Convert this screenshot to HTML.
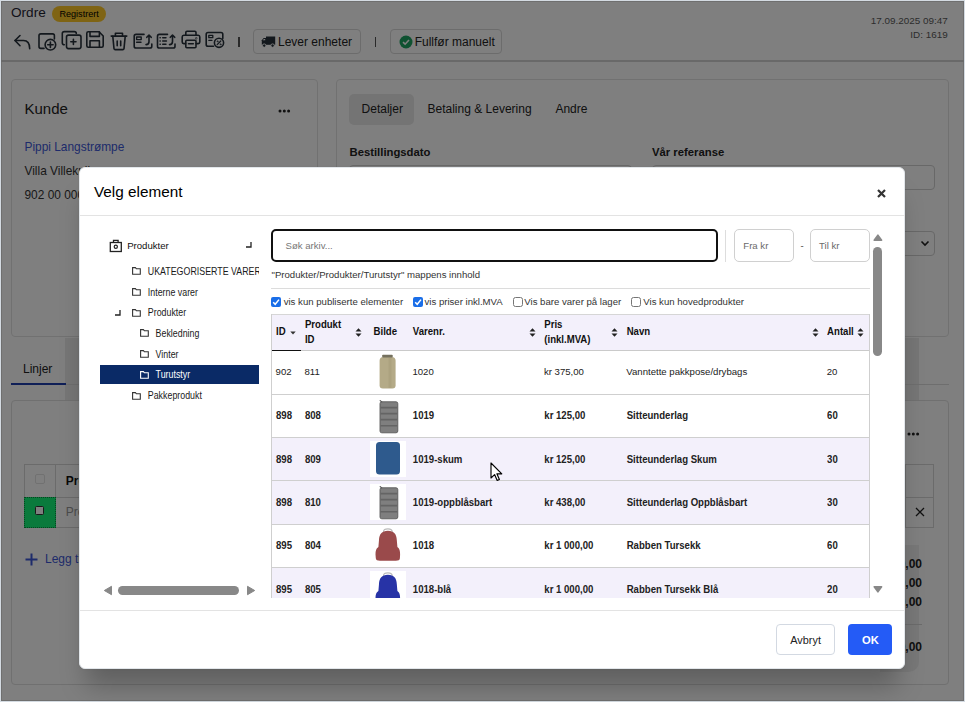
<!DOCTYPE html><html><head><meta charset="utf-8"><style>
*{box-sizing:border-box;margin:0;padding:0}
html,body{width:965px;height:702px;overflow:hidden;background:#d4dbe2;font-family:"Liberation Sans",sans-serif;color:#222}
.a{position:absolute;white-space:nowrap}
.t{position:absolute;white-space:nowrap;line-height:0;height:0}
.bx{position:absolute}
#ov{position:absolute;left:1px;top:1px;width:963px;height:700px;background:rgba(0,0,0,.5)}
#modal{position:absolute;left:79px;top:167px;width:826px;height:502px;background:#fff;border-radius:6px;border:1px solid #e2e6ea;
 box-shadow:0 24px 24px -7px rgba(0,0,0,.25),0 0 3px rgba(0,0,0,.06)}
.m{position:absolute;white-space:nowrap;line-height:0;height:0}
.tb{font-size:9.6px;color:#333}
.b{font-weight:bold}
</style></head><body>
<div class="bx" style="left:1px;top:1px;width:963px;height:700px;background:#fff;border:1px solid #dedede"></div>
<div id="pagec"><div class="t" style="left:11.0px;top:13.0px;font-size:13.6px;color:#1f2433;">Ordre</div><div class="bx" style="left:52.0px;top:6.0px;width:54.0px;height:15.7px;background:#ffc828;border-radius:8px"></div><div class="t" style="left:59.4px;top:13.8px;font-size:9.1px;color:#000;">Registrert</div><svg class="bx" style="left:12px;top:32px" width="20" height="20" viewBox="0 0 20 20" fill="none" stroke="#27313b" stroke-width="1.6" stroke-linecap="round" stroke-linejoin="round"><path d="M8 3.5L3 8.5L8 13.7"/><path d="M3 8.5H11.5Q17.7 8.5 17.7 16.8"/></svg><svg class="bx" style="left:37px;top:32px" width="22" height="20" viewBox="0 0 22 20" fill="none" stroke="#27313b" stroke-width="1.6" stroke-linecap="round" stroke-linejoin="round"><path d="M7 16.4H3.8Q2 16.4 2 14.6V3.6Q2 1.9 3.8 1.9H15.6Q17.4 1.9 17.4 3.6V7"/><circle cx="13.4" cy="12.7" r="5.3"/><path d="M13.4 10V15.4M10.7 12.7H16.1"/></svg><svg class="bx" style="left:61px;top:30px" width="22" height="20" viewBox="0 0 22 20" fill="none" stroke="#27313b" stroke-width="1.6" stroke-linecap="round" stroke-linejoin="round"><path d="M3.3 14.7Q1.3 14.7 1.3 12.7V3.5Q1.3 1.6 3.3 1.6H13.3Q15.3 1.6 15.3 3.5"/><rect x="5.5" y="5.1" width="14.5" height="13.5" rx="2"/><path d="M12.4 9.2V14.4M9.8 11.8H15"/></svg><svg class="bx" style="left:85px;top:30px" width="20" height="20" viewBox="0 0 20 20" fill="none" stroke="#27313b" stroke-width="1.6" stroke-linecap="round" stroke-linejoin="round"><path d="M1.8 3.3Q1.8 1.8 3.3 1.8H14L18.2 6V15.8Q18.2 17.3 16.7 17.3H3.3Q1.8 17.3 1.8 15.8Z"/><path d="M5 1.8V6.4H14.4V1.8"/><path d="M5 17.3V10.8H14.4V17.3"/></svg><svg class="bx" style="left:110px;top:32px" width="18" height="20" viewBox="0 0 18 20" fill="none" stroke="#27313b" stroke-width="1.6" stroke-linecap="round" stroke-linejoin="round"><path d="M1.2 4.1H16.8"/><path d="M5.4 4V1.3H12.5V4"/><path d="M2.8 4.4L4 16.6Q4.2 17.6 5.2 17.6H12.8Q13.8 17.6 14 16.6L15.2 4.4"/><path d="M7.2 9V13.8M10.7 9V13.8"/></svg><svg class="bx" style="left:133px;top:33px" width="21" height="17" viewBox="0 0 21 17" fill="none" stroke="#27313b" stroke-width="1.6" stroke-linecap="round" stroke-linejoin="round"><path d="M11 1.4H3Q1.2 1.4 1.2 3.2V13.2Q1.2 15 3 15H17Q18.8 15 18.8 13.2V11"/><rect x="3.6" y="4" width="4.6" height="2.6" stroke-width="1.4"/><path d="M3.6 9.3H8" stroke-width="1.4"/><path d="M13 11.6Q16 11.6 16 8.5V2.3M13.8 4.3L16 2L18.2 4.3"/></svg><svg class="bx" style="left:156px;top:33px" width="22" height="17" viewBox="0 0 22 17" fill="none" stroke="#27313b" stroke-width="1.6" stroke-linecap="round" stroke-linejoin="round"><path d="M11.5 1.4H3.3Q1.5 1.4 1.5 3.2V13.2Q1.5 15 3.3 15H17.3Q19 15 19 13.2V11"/><path d="M4 4.8H4.3M4 8H4.3M4 11.2H4.3M6.7 4.8H10M6.7 8H10.5M6.7 11.2H10" stroke-width="1.4"/><path d="M13.5 11.6Q16.5 11.6 16.5 8.5V2.3M14.3 4.3L16.5 2L18.7 4.3"/></svg><svg class="bx" style="left:181px;top:30px" width="20" height="19" viewBox="0 0 20 19" fill="none" stroke="#27313b" stroke-width="1.6" stroke-linecap="round" stroke-linejoin="round"><path d="M4.8 5.2V2.5Q4.8 1.3 6 1.3H13.8Q15 1.3 15 2.5V5.2"/><path d="M4.6 13.6H2.8Q1.2 13.6 1.2 12V7Q1.2 5.3 2.8 5.3H17.2Q18.8 5.3 18.8 7V12Q18.8 13.6 17.2 13.6H15.2"/><rect x="4.8" y="10.3" width="10.2" height="7.4" rx="1"/><path d="M7.5 13.8H12.3"/><circle cx="15.3" cy="8.3" r=".3" fill="{IC}"/></svg><svg class="bx" style="left:205px;top:31px" width="20" height="18" viewBox="0 0 20 18" fill="none" stroke="#27313b" stroke-width="1.6" stroke-linecap="round" stroke-linejoin="round"><path d="M8.5 15.3H3Q1.2 15.3 1.2 13.5V3.3Q1.2 1.5 3 1.5H16Q17.8 1.5 17.8 3.3V7.5"/><rect x="3.8" y="4.3" width="4" height="2.4" stroke-width="1.3"/><path d="M3.8 9.3H7" stroke-width="1.3"/><circle cx="14" cy="11.8" r="4.6"/><path d="M12.2 13.6L15.8 10" stroke-width="1.3"/><circle cx="12.5" cy="10.3" r=".5" fill="{IC}" stroke-width="0.8"/><circle cx="15.5" cy="13.3" r=".5" fill="{IC}" stroke-width="0.8"/></svg><div class="bx" style="left:238.3px;top:36.5px;width:1.5px;height:10.0px;background:#555"></div><div class="bx" style="left:253.4px;top:29.0px;width:107.3px;height:25.0px;border:1px solid #d8d8d8;border-radius:4px"></div><svg class="bx" style="left:261px;top:35px" width="15" height="13" viewBox="0 0 15 13"><path d="M5 1.5H14.2V9.8H5Z" fill="#27313b"/><path d="M0.8 5.2L2.6 3H5V9.8H0.8Z" fill="#27313b"/><circle cx="3.2" cy="10.6" r="1.7" fill="#27313b" stroke="#fff" stroke-width=".9"/><circle cx="11.6" cy="10.6" r="1.7" fill="#27313b" stroke="#fff" stroke-width=".9"/><path d="M1.8 5.3L2.9 4H4.2V5.3Z" fill="#fff"/></svg><div class="t" style="left:278.0px;top:41.5px;font-size:12px;color:#222;">Lever enheter</div><div class="bx" style="left:374.9px;top:36.5px;width:1.5px;height:10.0px;background:#555"></div><div class="bx" style="left:390.0px;top:29.0px;width:112.4px;height:25.0px;border:1px solid #d8d8d8;border-radius:4px"></div><svg class="bx" style="left:398.5px;top:34.8px" width="14" height="14" viewBox="0 0 14 14"><circle cx="7" cy="7" r="6.5" fill="#1fa463"/><path d="M4 7.2L6.1 9.2L10 5" fill="none" stroke="#fff" stroke-width="1.6"/></svg><div class="t" style="left:414.7px;top:41.5px;font-size:12px;color:#222;">Fullfør manuelt</div><div class="t" style="left:947.7px;top:21.3px;font-size:9.9px;color:#5a5a5a;transform:translateX(-100%)">17.09.2025 09:47</div><div class="t" style="left:947.7px;top:34.8px;font-size:9.9px;color:#5a5a5a;transform:translateX(-100%)">ID: 1619</div><div class="bx" style="left:1.0px;top:60.0px;width:963.0px;height:1.5px;background:#d2d2d2"></div><div class="bx" style="left:10.5px;top:79.3px;width:307.0px;height:258.2px;border:1px solid #e2e2e2;border-radius:4px"></div><div class="t" style="left:24.5px;top:109.2px;font-size:15px;color:#222;">Kunde</div><svg class="bx" style="left:278px;top:108.5px" width="13" height="4" viewBox="0 0 13 4"><circle cx="2" cy="2" r="1.5" fill="#222"/><circle cx="6.3" cy="2" r="1.5" fill="#222"/><circle cx="10.6" cy="2" r="1.5" fill="#222"/></svg><div class="t" style="left:24.5px;top:147.0px;font-size:11.9px;color:#3d57d6;">Pippi Langstrømpe</div><div class="t" style="left:24.5px;top:171.0px;font-size:11.9px;color:#333;">Villa Villekulla</div><div class="t" style="left:24.5px;top:194.5px;font-size:11.9px;color:#333;">902 00 000</div><div class="bx" style="left:335.5px;top:79.3px;width:613.0px;height:258.2px;border:1px solid #e2e2e2;border-radius:4px"></div><div class="bx" style="left:349.2px;top:93.5px;width:64.5px;height:31.0px;background:#e9e9e9;border-radius:5px"></div><div class="t" style="left:361.6px;top:109.2px;font-size:12px;color:#222;">Detaljer</div><div class="t" style="left:427.5px;top:109.2px;font-size:12px;color:#222;">Betaling &amp; Levering</div><div class="t" style="left:555.4px;top:109.2px;font-size:12px;color:#222;">Andre</div><div class="t" style="left:349.5px;top:152.3px;font-size:11.3px;color:#222;font-weight:bold;">Bestillingsdato</div><div class="t" style="left:652.0px;top:152.3px;font-size:11.3px;color:#222;font-weight:bold;">Vår referanse</div><div class="bx" style="left:349.0px;top:164.5px;width:283.0px;height:25.5px;border:1px solid #d0d0d0;border-radius:4px"></div><div class="bx" style="left:652.0px;top:164.5px;width:282.6px;height:25.5px;border:1px solid #d0d0d0;border-radius:4px"></div><div class="bx" style="left:652.0px;top:230.5px;width:282.6px;height:25.5px;border:1px solid #d0d0d0;border-radius:4px"></div><svg class="bx" style="left:920px;top:240px" width="10" height="7" viewBox="0 0 10 7"><path d="M1.5 1.5L5 5L8.5 1.5" fill="none" stroke="#222" stroke-width="1.6"/></svg><div class="t" style="left:23.0px;top:369.0px;font-size:12px;color:#222;">Linjer</div><div class="bx" style="left:65.0px;top:337.5px;width:15.0px;height:63.0px;background:#ececec"></div><div class="bx" style="left:905.0px;top:337.5px;width:14.0px;height:63.0px;background:#ececec"></div><div class="bx" style="left:880.0px;top:545.0px;width:39.0px;height:127.0px;background:#f1f1f1;border-radius:0 0 10px 0"></div><div class="bx" style="left:11.0px;top:384.0px;width:937.5px;height:1.0px;background:#dcdcdc"></div><div class="bx" style="left:11.0px;top:383.0px;width:55.0px;height:2.0px;background:#1e3fae"></div><div class="bx" style="left:10.5px;top:400.3px;width:938.0px;height:285.2px;border:1px solid #e0e0e0;border-radius:4px"></div><svg class="bx" style="left:907px;top:432px" width="13" height="4" viewBox="0 0 13 4"><circle cx="2" cy="2" r="1.5" fill="#222"/><circle cx="6.3" cy="2" r="1.5" fill="#222"/><circle cx="10.6" cy="2" r="1.5" fill="#222"/></svg><div class="bx" style="left:24.4px;top:464.0px;width:910.1px;height:63.5px;border:1px solid #d6d6d6"></div><div class="bx" style="left:24.4px;top:496.5px;width:910.1px;height:1.0px;background:#d6d6d6"></div><div class="bx" style="left:55.0px;top:464.5px;width:1.0px;height:63.0px;background:#d6d6d6"></div><div class="bx" style="left:904.5px;top:464.5px;width:1.0px;height:63.0px;background:#d6d6d6"></div><div class="bx" style="left:35.2px;top:474.3px;width:9.8px;height:9.7px;border:1px solid #e2e2e2;border-radius:2px;background:#fff"></div><div class="t" style="left:65.8px;top:481.2px;font-size:12px;color:#111;font-weight:bold;">Produkt</div><div class="bx" style="left:24.0px;top:496.5px;width:32.0px;height:31.5px;background:#14f478;outline:1px dotted #0b8a40;outline-offset:-1px"></div><div class="bx" style="left:35.3px;top:506.0px;width:9.0px;height:9.3px;border:1.2px solid #333;border-radius:1.5px;background:#fff"></div><div class="t" style="left:65.8px;top:512.0px;font-size:12px;color:#999;">Produkt</div><svg class="bx" style="left:915px;top:507px" width="10" height="10" viewBox="0 0 10 10"><path d="M1 1L9 9M9 1L1 9" stroke="#222" stroke-width="1.3"/></svg><svg class="bx" style="left:24.5px;top:553px" width="13" height="13" viewBox="0 0 13 13"><path d="M6.5 0.5V12.5M0.5 6.5H12.5" stroke="#3d57d6" stroke-width="2"/></svg><div class="t" style="left:45.0px;top:559.3px;font-size:12px;color:#3d57d6;">Legg til linje</div><div class="t" style="left:922.0px;top:564.0px;font-size:12px;color:#222;font-weight:bold;transform:translateX(-100%)">1 000,00</div><div class="t" style="left:922.0px;top:582.9px;font-size:12px;color:#222;font-weight:bold;transform:translateX(-100%)">1 000,00</div><div class="t" style="left:922.0px;top:601.6px;font-size:12px;color:#222;font-weight:bold;transform:translateX(-100%)">1 000,00</div><div class="bx" style="left:800.0px;top:624.0px;width:122.0px;height:1.0px;background:#d6d6d6"></div><div class="t" style="left:922.0px;top:646.7px;font-size:12px;color:#222;font-weight:bold;transform:translateX(-100%)">1 000,00</div></div>
<div id="ov"></div>
<div id="modal">
<div class="m" style="left:14.0px;top:23.5px;font-size:15.3px;color:#000;">Velg element</div><svg class="bx" style="left:797px;top:20.5px" width="9" height="9" viewBox="0 0 9 9"><path d="M1 1L8 8M8 1L1 8" stroke="#333" stroke-width="2.2" stroke-linecap="butt"/></svg><div class="bx" style="left:0.0px;top:47.0px;width:825.0px;height:1.0px;background:#e3e3e3"></div><div class="bx" style="left:0.0px;top:442.0px;width:825.0px;height:1.0px;background:#e3e3e3"></div><div class="bx" style="left:696.3px;top:456.0px;width:58.7px;height:31.0px;border:1px solid #d3d9e2;border-radius:4px;background:#fff"></div><div class="m" style="left:710.3px;top:472.0px;font-size:10.9px;color:#222;">Avbryt</div><div class="bx" style="left:768.0px;top:456.0px;width:44.0px;height:31.0px;background:#245bf6;border-radius:4px"></div><div class="m" style="left:782.0px;top:472.0px;font-size:11.2px;color:#fff;font-weight:bold;">OK</div><svg class="bx" style="left:29px;top:71px" width="14" height="14" viewBox="0 0 14 14"><rect x="1.3" y="3.5" width="11" height="9" fill="none" stroke="#222" stroke-width="1.3"/><path d="M4.5 3.3V1.4h4.6v1.9" fill="none" stroke="#222" stroke-width="1.3"/><circle cx="6.8" cy="7.8" r="1.6" fill="none" stroke="#222" stroke-width="1.2"/></svg><div class="m" style="left:47.2px;top:77.5px;font-size:9.6px;color:#111;">Produkter</div><svg class="bx" style="left:166.0px;top:74.0px" width="6" height="6" viewBox="0 0 6 6"><path d="M5 0V5H0" fill="none" stroke="#222" stroke-width="1.3"/></svg><svg class="bx" style="left:34.5px;top:141.5px" width="6" height="6" viewBox="0 0 6 6"><path d="M5 0V5H0" fill="none" stroke="#222" stroke-width="1.3"/></svg><div class="bx" style="left:20.0px;top:197.0px;width:159.0px;height:19.0px;background:#0a2a66"></div><div class="bx" style="left:0;top:0;width:179px;height:420px;overflow:hidden"><svg class="bx" style="left:52.0px;top:98.7px" width="9" height="8" viewBox="0 0 9 8"><path d="M0.6 7.3V0.6H3.4L4.4 1.8H8.3V7.3Z" fill="none" stroke="#333" stroke-width="1.1"/></svg><div class="m" style="left:67.8px;top:103.6px;font-size:8.85px;color:#1a1a1a;transform:scaleY(1.13);transform-origin:0 0;">UKATEGORISERTE VARER</div><svg class="bx" style="left:52.0px;top:119.6px" width="9" height="8" viewBox="0 0 9 8"><path d="M0.6 7.3V0.6H3.4L4.4 1.8H8.3V7.3Z" fill="none" stroke="#333" stroke-width="1.1"/></svg><div class="m" style="left:67.8px;top:124.5px;font-size:8.85px;color:#1a1a1a;transform:scaleY(1.13);transform-origin:0 0;">Interne varer</div><svg class="bx" style="left:52.0px;top:140.5px" width="9" height="8" viewBox="0 0 9 8"><path d="M0.6 7.3V0.6H3.4L4.4 1.8H8.3V7.3Z" fill="none" stroke="#333" stroke-width="1.1"/></svg><div class="m" style="left:67.8px;top:145.4px;font-size:8.85px;color:#1a1a1a;transform:scaleY(1.13);transform-origin:0 0;">Produkter</div><svg class="bx" style="left:60.0px;top:161.1px" width="9" height="8" viewBox="0 0 9 8"><path d="M0.6 7.3V0.6H3.4L4.4 1.8H8.3V7.3Z" fill="none" stroke="#333" stroke-width="1.1"/></svg><div class="m" style="left:75.6px;top:166.0px;font-size:8.85px;color:#1a1a1a;transform:scaleY(1.13);transform-origin:0 0;">Bekledning</div><svg class="bx" style="left:60.0px;top:181.8px" width="9" height="8" viewBox="0 0 9 8"><path d="M0.6 7.3V0.6H3.4L4.4 1.8H8.3V7.3Z" fill="none" stroke="#333" stroke-width="1.1"/></svg><div class="m" style="left:75.6px;top:186.7px;font-size:8.85px;color:#1a1a1a;transform:scaleY(1.13);transform-origin:0 0;">Vinter</div><svg class="bx" style="left:60.0px;top:202.5px" width="9" height="8" viewBox="0 0 9 8"><path d="M0.6 7.3V0.6H3.4L4.4 1.8H8.3V7.3Z" fill="none" stroke="#fff" stroke-width="1.1"/></svg><div class="m" style="left:75.6px;top:207.4px;font-size:8.85px;color:#fff;transform:scaleY(1.13);transform-origin:0 0;">Turutstyr</div><svg class="bx" style="left:52.0px;top:223.5px" width="9" height="8" viewBox="0 0 9 8"><path d="M0.6 7.3V0.6H3.4L4.4 1.8H8.3V7.3Z" fill="none" stroke="#333" stroke-width="1.1"/></svg><div class="m" style="left:67.8px;top:228.4px;font-size:8.85px;color:#1a1a1a;transform:scaleY(1.13);transform-origin:0 0;">Pakkeprodukt</div></div><svg class="bx" style="left:23px;top:417px" width="10" height="11" viewBox="0 0 10 11"><path d="M1.3 5.5L8.5 1.3V9.7Z" fill="#888" stroke="#888" stroke-linejoin="round"/></svg><div class="bx" style="left:37.8px;top:418.0px;width:121.2px;height:9.0px;background:#888;border-radius:5px"></div><svg class="bx" style="left:166px;top:417px" width="10" height="11" viewBox="0 0 10 11"><path d="M8.7 5.5L1.5 1.3V9.7Z" fill="#888" stroke="#888" stroke-linejoin="round"/></svg><div class="bx" style="left:191.2px;top:61.2px;width:446.6px;height:32.8px;border:2px solid #111;border-radius:5px"></div><div class="m" style="left:205.5px;top:77.5px;font-size:9.6px;color:#777;">Søk arkiv...</div><div class="bx" style="left:645.0px;top:62.0px;width:1.0px;height:31.5px;background:#ddd"></div><div class="bx" style="left:654.4px;top:61.4px;width:59.4px;height:32.2px;border:1px solid #d0d0d0;border-radius:5px"></div><div class="m" style="left:663.3px;top:77.5px;font-size:9.6px;color:#6a6a6a;">Fra kr</div><div class="m" style="left:720.5px;top:77.5px;font-size:9.6px;color:#444;">-</div><div class="bx" style="left:730.0px;top:61.4px;width:59.5px;height:32.2px;border:1px solid #d0d0d0;border-radius:5px"></div><div class="m" style="left:739.0px;top:77.5px;font-size:9.6px;color:#6a6a6a;">Til kr</div><svg class="bx" style="left:792px;top:65px" width="12" height="9" viewBox="0 0 12 9"><path d="M2.2 7.2L5.9 2.2L9.6 7.2Z" fill="#888" stroke="#888" stroke-width="1.6" stroke-linejoin="round"/></svg><div class="bx" style="left:793.2px;top:79.0px;width:8.8px;height:109.2px;background:#888;border-radius:5px"></div><svg class="bx" style="left:792px;top:417px" width="12" height="9" viewBox="0 0 12 9"><path d="M2.2 1.8L5.9 6.8L9.6 1.8Z" fill="#888" stroke="#888" stroke-width="1.6" stroke-linejoin="round"/></svg><div class="m" style="left:191.5px;top:106.9px;font-size:9.6px;color:#333;">"Produkter/Produkter/Turutstyr" mappens innhold</div><div class="bx" style="left:191.0px;top:120.0px;width:599.0px;height:1.0px;background:#dcdcdc"></div><svg class="bx" style="left:191.2px;top:128.7px" width="10" height="10" viewBox="0 0 10 10"><rect x="0" y="0" width="10" height="10" rx="2" fill="#1a6ee8"/><path d="M2.2 5.2L4.2 7.3L8 2.6" fill="none" stroke="#fff" stroke-width="1.5"/></svg><div class="m" style="left:203.7px;top:133.5px;font-size:9.6px;color:#333;">vis kun publiserte elementer</div><svg class="bx" style="left:333.0px;top:128.7px" width="10" height="10" viewBox="0 0 10 10"><rect x="0" y="0" width="10" height="10" rx="2" fill="#1a6ee8"/><path d="M2.2 5.2L4.2 7.3L8 2.6" fill="none" stroke="#fff" stroke-width="1.5"/></svg><div class="m" style="left:344.5px;top:133.5px;font-size:9.6px;color:#333;">vis priser inkl.MVA</div><svg class="bx" style="left:432.7px;top:128.7px" width="10" height="10" viewBox="0 0 10 10"><rect x="0.5" y="0.5" width="9" height="9" rx="2" fill="#fff" stroke="#767676"/></svg><div class="m" style="left:444.3px;top:133.5px;font-size:9.6px;color:#333;">Vis bare varer på lager</div><svg class="bx" style="left:551.3px;top:128.7px" width="10" height="10" viewBox="0 0 10 10"><rect x="0.5" y="0.5" width="9" height="9" rx="2" fill="#fff" stroke="#767676"/></svg><div class="m" style="left:563.3px;top:133.5px;font-size:9.6px;color:#333;">Vis kun hovedprodukter</div><div class="bx" style="left:191.3px;top:146px;width:598.3px;height:283.6px;overflow:hidden;border-left:1px solid #cfcfcf;border-right:1px solid #cfcfcf"><div class="bx" style="left:-1.0px;top:0.0px;width:598.7px;height:37.0px;background:#f3f0fb;border-top:1px solid #d6d6d6;border-bottom:1px solid #cacaca"></div><div class="bx" style="left:-1.0px;top:35.5px;width:29.7px;height:1.7px;background:#111"></div><div class="m tb" style="left:3.7px;top:18.3px;color:#111;font-weight:bold;transform:scaleY(1.05);transform-origin:0 0">ID</div><svg class="bx" style="left:17.7px;top:16.5px" width="6" height="4" viewBox="0 0 6 4"><path d="M0.3 0.5H5.7L3 3.5Z" fill="#333"/></svg><div class="m tb" style="left:32.6px;top:10.9px;color:#111;font-weight:bold;transform:scaleY(1.05);transform-origin:0 0">Produkt</div><div class="m tb" style="left:32.6px;top:25.9px;color:#111;font-weight:bold;transform:scaleY(1.05);transform-origin:0 0">ID</div><svg class="bx" style="left:83.2px;top:13.5px" width="7" height="9" viewBox="0 0 7 9"><path d="M0.5 3.6H6.5L3.5 0.3Z M0.5 5.4H6.5L3.5 8.7Z" fill="#222"/></svg><div class="m tb" style="left:101.3px;top:18.3px;color:#111;font-weight:bold;transform:scaleY(1.05);transform-origin:0 0">Bilde</div><div class="m tb" style="left:140.5px;top:18.3px;color:#111;font-weight:bold;transform:scaleY(1.05);transform-origin:0 0">Varenr.</div><svg class="bx" style="left:257.2px;top:13.5px" width="7" height="9" viewBox="0 0 7 9"><path d="M0.5 3.6H6.5L3.5 0.3Z M0.5 5.4H6.5L3.5 8.7Z" fill="#222"/></svg><div class="m tb" style="left:272.0px;top:10.9px;color:#111;font-weight:bold;transform:scaleY(1.05);transform-origin:0 0">Pris</div><div class="m tb" style="left:272.0px;top:25.9px;color:#111;font-weight:bold;transform:scaleY(1.05);transform-origin:0 0">(inkl.MVA)</div><svg class="bx" style="left:338.9px;top:13.5px" width="7" height="9" viewBox="0 0 7 9"><path d="M0.5 3.6H6.5L3.5 0.3Z M0.5 5.4H6.5L3.5 8.7Z" fill="#222"/></svg><div class="m tb" style="left:354.4px;top:18.3px;color:#111;font-weight:bold;transform:scaleY(1.05);transform-origin:0 0">Navn</div><svg class="bx" style="left:539.5px;top:13.5px" width="7" height="9" viewBox="0 0 7 9"><path d="M0.5 3.6H6.5L3.5 0.3Z M0.5 5.4H6.5L3.5 8.7Z" fill="#222"/></svg><div class="m tb" style="left:554.8px;top:18.3px;color:#111;font-weight:bold;transform:scaleY(1.05);transform-origin:0 0">Antall</div><svg class="bx" style="left:585.0px;top:13.5px" width="7" height="9" viewBox="0 0 7 9"><path d="M0.5 3.6H6.5L3.5 0.3Z M0.5 5.4H6.5L3.5 8.7Z" fill="#222"/></svg><div class="bx" style="left:-1.0px;top:37.5px;width:598.7px;height:43.3px;background:#fff;border-bottom:1px solid #cfcfcf"></div><div class="m tb" style="left:3.3px;top:57.8px;color:#222;">902</div><div class="m tb" style="left:32.2px;top:57.8px;color:#222;">811</div><div class="m tb" style="left:140.1px;top:57.8px;color:#222;">1020</div><div class="m tb" style="left:271.6px;top:57.8px;color:#222;">kr 375,00</div><div class="m tb" style="left:354.0px;top:57.8px;color:#222;">Vanntette pakkpose/drybags</div><div class="m tb" style="left:554.4px;top:57.8px;color:#222;">20</div><svg class="bx" style="left:106.7px;top:40.0px" width="18" height="35" viewBox="0 0 18 35"><path d="M0.6 6.8Q0.6 3 4.2 3H12.6Q16.6 3 16.6 6.8V31.4Q16.6 34.4 13.4 34.4H3.8Q0.6 34.4 0.6 31.4Z" fill="#b4aa87"/><path d="M11 4V34" stroke="#aca27f" stroke-width="3"/><rect x="3.2" y="0.8" width="10.5" height="2.8" rx="0.8" fill="#74705e"/></svg><div class="bx" style="left:-1.0px;top:80.8px;width:598.7px;height:43.3px;background:#fff;border-bottom:1px solid #cfcfcf"></div><div class="m tb" style="left:3.7px;top:102.2px;color:#222;font-weight:bold;transform:scaleY(1.05);transform-origin:0 0">898</div><div class="m tb" style="left:32.6px;top:102.2px;color:#222;font-weight:bold;transform:scaleY(1.05);transform-origin:0 0">808</div><div class="m tb" style="left:140.5px;top:102.2px;color:#222;font-weight:bold;transform:scaleY(1.05);transform-origin:0 0">1019</div><div class="m tb" style="left:272.0px;top:102.2px;color:#222;font-weight:bold;transform:scaleY(1.05);transform-origin:0 0">kr 125,00</div><div class="m tb" style="left:354.4px;top:102.2px;color:#222;font-weight:bold;transform:scaleY(1.05);transform-origin:0 0">Sitteunderlag</div><div class="m tb" style="left:554.8px;top:102.2px;color:#222;font-weight:bold;transform:scaleY(1.05);transform-origin:0 0">60</div><svg class="bx" style="left:106.7px;top:85.7px" width="20" height="34" viewBox="0 0 20 34"><rect x="1" y="1.8" width="17.8" height="31" rx="1.8" fill="#7f7f7f" stroke="#5a5a5a" stroke-width="0.9"/><path d="M1.5 7.6H18.3M1.5 13.6H18.3M1.5 19.6H18.3M1.5 25.7H18.3" stroke="#646464" stroke-width="1.6"/><path d="M0.8 0.3L3 2.2" stroke="#555" stroke-width="1.1"/></svg><div class="bx" style="left:-1.0px;top:124.1px;width:598.7px;height:43.3px;background:#f3f0fb;border-bottom:1px solid #cfcfcf"></div><div class="m tb" style="left:3.7px;top:145.5px;color:#222;font-weight:bold;transform:scaleY(1.05);transform-origin:0 0">898</div><div class="m tb" style="left:32.6px;top:145.5px;color:#222;font-weight:bold;transform:scaleY(1.05);transform-origin:0 0">809</div><div class="m tb" style="left:140.5px;top:145.5px;color:#222;font-weight:bold;transform:scaleY(1.05);transform-origin:0 0">1019-skum</div><div class="m tb" style="left:272.0px;top:145.5px;color:#222;font-weight:bold;transform:scaleY(1.05);transform-origin:0 0">kr 125,00</div><div class="m tb" style="left:354.4px;top:145.5px;color:#222;font-weight:bold;transform:scaleY(1.05);transform-origin:0 0">Sitteunderlag Skum</div><div class="m tb" style="left:554.8px;top:145.5px;color:#222;font-weight:bold;transform:scaleY(1.05);transform-origin:0 0">30</div><div class="bx" style="left:97.7px;top:127.1px;width:36.0px;height:36.0px;background:#fff"></div><svg class="bx" style="left:103.7px;top:128.4px" width="25" height="34" viewBox="0 0 25 34"><rect x="0" y="0" width="24" height="32.6" rx="3.5" fill="#2e5a8d"/></svg><div class="bx" style="left:-1.0px;top:167.4px;width:598.7px;height:43.3px;background:#f3f0fb;border-bottom:1px solid #cfcfcf"></div><div class="m tb" style="left:3.7px;top:188.8px;color:#222;font-weight:bold;transform:scaleY(1.05);transform-origin:0 0">898</div><div class="m tb" style="left:32.6px;top:188.8px;color:#222;font-weight:bold;transform:scaleY(1.05);transform-origin:0 0">810</div><div class="m tb" style="left:140.5px;top:188.8px;color:#222;font-weight:bold;transform:scaleY(1.05);transform-origin:0 0">1019-oppblåsbart</div><div class="m tb" style="left:272.0px;top:188.8px;color:#222;font-weight:bold;transform:scaleY(1.05);transform-origin:0 0">kr 438,00</div><div class="m tb" style="left:354.4px;top:188.8px;color:#222;font-weight:bold;transform:scaleY(1.05);transform-origin:0 0">Sitteunderlag Oppblåsbart</div><div class="m tb" style="left:554.8px;top:188.8px;color:#222;font-weight:bold;transform:scaleY(1.05);transform-origin:0 0">30</div><div class="bx" style="left:97.7px;top:170.4px;width:36.0px;height:36.0px;background:#fff"></div><svg class="bx" style="left:106.7px;top:172.0px" width="20" height="34" viewBox="0 0 20 34"><rect x="1" y="1.8" width="17.8" height="31" rx="1.8" fill="#7f7f7f" stroke="#5a5a5a" stroke-width="0.9"/><path d="M1.5 7.6H18.3M1.5 13.6H18.3M1.5 19.6H18.3M1.5 25.7H18.3" stroke="#646464" stroke-width="1.6"/><path d="M0.8 0.3L3 2.2" stroke="#555" stroke-width="1.1"/></svg><div class="bx" style="left:-1.0px;top:210.7px;width:598.7px;height:43.3px;background:#fff;border-bottom:1px solid #cfcfcf"></div><div class="m tb" style="left:3.7px;top:232.2px;color:#222;font-weight:bold;transform:scaleY(1.05);transform-origin:0 0">895</div><div class="m tb" style="left:32.6px;top:232.2px;color:#222;font-weight:bold;transform:scaleY(1.05);transform-origin:0 0">804</div><div class="m tb" style="left:140.5px;top:232.2px;color:#222;font-weight:bold;transform:scaleY(1.05);transform-origin:0 0">1018</div><div class="m tb" style="left:272.0px;top:232.2px;color:#222;font-weight:bold;transform:scaleY(1.05);transform-origin:0 0">kr 1 000,00</div><div class="m tb" style="left:354.4px;top:232.2px;color:#222;font-weight:bold;transform:scaleY(1.05);transform-origin:0 0">Rabben Tursekk</div><div class="m tb" style="left:554.8px;top:232.2px;color:#222;font-weight:bold;transform:scaleY(1.05);transform-origin:0 0">60</div><svg class="bx" style="left:102.2px;top:214.2px" width="28" height="34" viewBox="0 0 28 34"><path d="M9.5 4Q9.5 0.8 13.9 0.8Q18.3 0.8 18.3 4" fill="none" stroke="#bbb" stroke-width="1.2"/><path d="M13.9 2.8C20 2.8 22.6 6.5 22.8 12L23.4 19C25.6 20.5 26.1 23 26.1 26.5L25.9 30.3C25.7 32.1 24.4 32.7 21.8 32.7H6C3.4 32.7 2 32.1 1.8 30.3L1.5 26.5C1.5 23 2 20.5 4.4 19L5 12C5.2 6.5 7.8 2.8 13.9 2.8Z" fill="#9a4a4b"/></svg><div class="bx" style="left:-1.0px;top:254.0px;width:598.7px;height:43.3px;background:#f3f0fb;border-bottom:1px solid #cfcfcf"></div><div class="m tb" style="left:3.7px;top:275.5px;color:#222;font-weight:bold;transform:scaleY(1.05);transform-origin:0 0">895</div><div class="m tb" style="left:32.6px;top:275.5px;color:#222;font-weight:bold;transform:scaleY(1.05);transform-origin:0 0">805</div><div class="m tb" style="left:140.5px;top:275.5px;color:#222;font-weight:bold;transform:scaleY(1.05);transform-origin:0 0">1018-blå</div><div class="m tb" style="left:272.0px;top:275.5px;color:#222;font-weight:bold;transform:scaleY(1.05);transform-origin:0 0">kr 1 000,00</div><div class="m tb" style="left:354.4px;top:275.5px;color:#222;font-weight:bold;transform:scaleY(1.05);transform-origin:0 0">Rabben Tursekk Blå</div><div class="m tb" style="left:554.8px;top:275.5px;color:#222;font-weight:bold;transform:scaleY(1.05);transform-origin:0 0">20</div><div class="bx" style="left:97.7px;top:257.0px;width:36.0px;height:36.0px;background:#fff"></div><svg class="bx" style="left:102.2px;top:257.5px" width="28" height="34" viewBox="0 0 28 34"><path d="M9.5 4Q9.5 0.8 13.9 0.8Q18.3 0.8 18.3 4" fill="none" stroke="#bbb" stroke-width="1.2"/><path d="M13.9 2.8C20 2.8 22.6 6.5 22.8 12L23.4 19C25.6 20.5 26.1 23 26.1 26.5L25.9 30.3C25.7 32.1 24.4 32.7 21.8 32.7H6C3.4 32.7 2 32.1 1.8 30.3L1.5 26.5C1.5 23 2 20.5 4.4 19L5 12C5.2 6.5 7.8 2.8 13.9 2.8Z" fill="#2733a6"/></svg></div><svg class="bx" style="left:409.6px;top:294.2px" width="14" height="20" viewBox="0 0 14 20"><path d="M1 1V16L4.6 12.6L7.2 18.4L9.4 17.4L6.9 11.8H11.8Z" fill="#fff" stroke="#000" stroke-width="1.15" stroke-linejoin="round"/></svg>
</div>
</body></html>
